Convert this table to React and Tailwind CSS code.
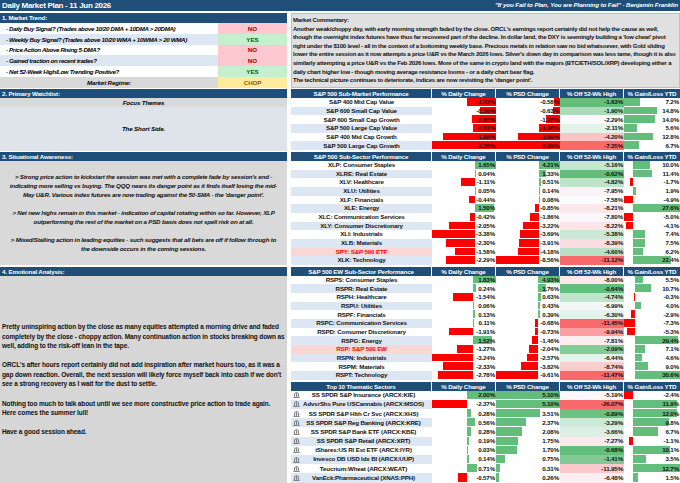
import React from "react";

const FONT = "font-['Liberation_Sans',Arial,sans-serif]";
const TXT = "text-[6.2px] tracking-[-0.15px]";

const trend = [
  { label: "Daily Buy Signal? (Trades above 10/20 DMA + 10DMA > 20DMA)", ok: false },
  { label: "Weekly Buy Signal? (Trades above 10/20 WMA + 10WMA > 20 WMA)", ok: true },
  { label: "Price Action Above Rising 5-DMA?", ok: false },
  { label: "Gained traction on recent trades?", ok: false },
  { label: "Net 52-Week High/Low Trending Positive?", ok: true },
];

const situational = [
  "> Strong price action to kickstart the session was met with a complete fade by session's end -",
  "indicating more selling vs buying. The QQQ nears its danger point as it finds itself losing the mid-",
  "May U&R. Various index futures are now trading against the 50-SMA - the 'danger point'.",
  "",
  "> Net new highs remain in this market - indication of capital rotating within so far. However, XLP",
  "outperforming the rest of the market on a PSD basis does not spell risk on at all.",
  "",
  "> Mixed/Stalling action in leading equities - such suggests that all bets are off if follow through to",
  "the downside occurs in the coming sessions.",
];

const emotional = [
  "Pretty uninspiring action by the close as many equities attempted a morning drive and faded",
  "completely by the close - choppy action. Many continuation action in stocks breaking down as",
  "well, adding to the risk-off lean in the tape.",
  "",
  "ORCL's after hours report certainly did not add inspiration after market hours too, as it was a",
  "gap down reaction. Overall, the next session will likely force myself back into cash if we don't",
  "see a strong recovery as I wait for the dust to settle.",
  "",
  "Nothing too much to talk about until we see more constructive price action to trade again.",
  "Here comes the summer lull!",
  "",
  "Have a good session ahead.",
];

const commentary = [
  "Another weak/choppy day, with early morning strength faded by the close. ORCL's earnings report certainly did not help the cause as well,",
  "though the overnight index futures have thus far recovered part of the decline. In dollar land, the DXY is seemingly building a 'low cheat' pivot",
  "right under the $100 level - all in the context of a bottoming weekly base. Precious metals in relation saw no bid whatsoever, with Gold sliding",
  "lower the entire session as it now attempts a price U&R vs the March 2026 lows. Silver's down day in comparison was less tame, though it is also",
  "similarly attempting a price U&R vs the Feb 2026 lows. More of the same in crypto land with the majors (BTC/ETH/SOL/XRP) developing either a",
  "daily chart higher low - though moving average resistance looms - or a daily chart bear flag.",
  "The technical picture continues to deteriorate, indices are now revisiting the 'danger point'.",
];

const tables = [
  {
    title: "S&P 500 Sub-Market Performance",
    rowH: "h-[8.67px]",
    ytdMax: 25,
    rows: [
      ["S&P 400 Mid Cap Value", -1.03, -0.58, -1.63, 7.2],
      ["S&P 600 Small Cap Value", -0.56, -0.63, -1.9, 14.8],
      ["S&P 600 Small Cap Growth", -0.85, -1.28, -2.29, 14.0],
      ["S&P 500 Large Cap Value", -0.81, -1.96, -2.11, 5.6],
      ["S&P 400 Mid Cap Growth", -1.88, -3.89, -4.2, 12.8],
      ["S&P 500 Large Cap Growth", -2.26, -5.99, -7.35, 6.7],
    ],
  },
  {
    title: "S&P 500 Sub-Sector Performance",
    rowH: "h-[8.67px]",
    rows: [
      ["XLP: Consumer Staples", 1.65, 4.21, -5.16, 10.0],
      ["XLRE: Real Estate", 0.04, 1.33, -0.62, 11.4],
      ["XLV: Healthcare", -1.11, 0.51, -4.82, -1.7],
      ["XLU: Utilities", 0.05, 0.14, -7.95, 1.9],
      ["XLF: Financials", -0.44, 0.08, -7.58, -4.9],
      ["XLE: Energy", 1.5, -0.85, -8.21, 27.6],
      ["XLC: Communication Services", -0.42, -1.86, -7.8, -5.0],
      ["XLY: Consumer Discretionary", -2.05, -3.22, -8.22, -4.1],
      ["XLI: Industrials", -3.38, -3.69, -5.38, 7.4],
      ["XLB: Materials", -2.3, -3.91, -8.39, 7.5],
      ["SPY: S&P 500 ETF", -1.58, -4.18, -4.6, 6.2, true],
      ["XLK: Technology", -2.29, -8.56, -11.12, 22.4],
    ],
  },
  {
    title: "S&P 500 EW Sub-Sector Performance",
    rowH: "h-[8.67px]",
    rows: [
      ["RSPS: Consumer Staples", 1.83, 4.93, -8.0, 5.5],
      ["RSPR: Real Estate", 0.24, 1.76, -0.64, 10.7],
      ["RSPH: Healthcare", -1.54, 0.63, -4.74, -0.3],
      ["RSPU: Utilities", 0.06, 0.43, -6.99, 4.0],
      ["RSPF: Financials", 0.13, 0.39, -6.3, -2.9],
      ["RSPC: Communication Services", 0.11, -0.68, -11.45, -7.3],
      ["RSPD: Consumer Discretionary", -1.91, -0.73, -9.94, -5.3],
      ["RSPG: Energy", 1.52, -1.46, -7.81, 29.4],
      ["RSP: S&P 500 EW", -1.27, -2.04, -2.09, 7.1, true],
      ["RSPN: Industrials", -3.24, -2.57, -6.44, 4.6],
      ["RSPM: Materials", -2.33, -3.82, -8.74, 9.0],
      ["RSPT: Technology", -2.78, -9.61, -11.47, 30.6],
    ],
  },
  {
    title: "Top 10 Thematic Sectors",
    rowH: "h-[9.2px]",
    icon: true,
    rows: [
      ["SS SPDR S&P Insurance (ARCX:KIE)", 2.0, 5.1, -5.19, -2.4],
      ["AdvsrShs Pure USCannabis (ARCX:MSOS)", -2.37, 5.1, -26.07, 11.9],
      ["SS SPDR S&P Hlth Cr Svc (ARCX:XHS)", 0.28, 3.51, -0.89, 12.0],
      ["SS SPDR S&P Reg Banking (ARCX:KRE)", 0.56, 2.37, -3.29, 9.8],
      ["SS SPDR S&P Bank ETF (ARCX:KBE)", 0.28, 2.08, -3.66, 6.7],
      ["SS SPDR S&P Retail (ARCX:XRT)", 0.19, 1.75, -7.27, -1.1],
      ["iShares:US Rl Est ETF (ARCX:IYR)", 0.03, 1.7, -0.68, 10.1],
      ["Invesco DB USD Idx Bl (ARCX:UUP)", 0.14, 0.75, -1.41, 3.5],
      ["Teucrium:Wheat (ARCX:WEAT)", 0.71, 0.31, -11.95, 12.7],
      ["VanEck:Pharmaceutical (XNAS:PPH)", -0.57, 0.26, -6.48, 1.5],
    ],
  },
];

function mix(a, b, t) {
  const c = a.map((x, i) => Math.round(x + (b[i] - x) * Math.max(0, Math.min(1, t))));
  return `rgb(${c[0]},${c[1]},${c[2]})`;
}

// 3-colour scale, midpoint at the median like Excel's default
function scaleColor(v, vals) {
  const s = [...vals].sort((a, b) => a - b);
  const n = s.length;
  const mid = n % 2 ? s[(n - 1) / 2] : (s[n / 2 - 1] + s[n / 2]) / 2;
  const red = [248, 105, 107];
  const white = [252, 252, 255];
  const green = [99, 190, 123];
  if (v <= mid) return mix(red, white, (v - s[0]) / (mid - s[0] || 1));
  return mix(white, green, (v - mid) / (s[n - 1] - mid || 1));
}

function BarCell({ v, vals, digits, fixedMax, w }) {
  const lo = Math.min(...vals, 0);
  let hi = Math.max(...vals, 0);
  if (fixedMax) hi = Math.max(hi, fixedMax);
  const range = hi - lo || 1;
  const axis = (-lo / range) * 100;
  const len = (Math.abs(v) / range) * 100;
  const left = v < 0 ? axis - len : axis;
  return (
    <div className={`relative h-full ${w} bg-white`}>
      <div
        className={v < 0 ? "absolute top-0 bottom-[1px] bg-[#ff0000]" : "absolute top-0 bottom-[1px] bg-[#63be7b]"}
        style={{ left: left + "%", width: len + "%" }}
      />
      <div className="relative h-full flex items-center justify-end pr-[1px]">{v.toFixed(digits)}%</div>
    </div>
  );
}

function StockIcon() {
  return (
    <svg width="7" height="6" viewBox="0 0 7 6" className="shrink-0">
      <path d="M0.5 1.6 L3.5 0.3 L6.5 1.6 Z" fill="#595959" />
      <rect x="1" y="2" width="0.8" height="2.6" fill="#595959" />
      <rect x="3.1" y="2" width="0.8" height="2.6" fill="#595959" />
      <rect x="5.2" y="2" width="0.8" height="2.6" fill="#595959" />
      <rect x="0.4" y="4.8" width="6.2" height="0.9" fill="#595959" />
    </svg>
  );
}

function PerfTable({ t }) {
  const cols = [1, 2, 3, 4].map((i) => t.rows.map((r) => r[i]));
  return (
    <div className="flex flex-col">
      <div className={`flex h-[9px] items-center bg-[#1f4e78] text-white font-bold ${TXT} leading-[9px]`}>
        <div className="w-[141px] h-full text-center border-r border-white">{t.title}</div>
        <div className="w-[64px] h-full text-center border-r border-white">% Daily Change</div>
        <div className="w-[64px] h-full text-center border-r border-white">% PSD Change</div>
        <div className="w-[64px] h-full text-center border-r border-white">% Off 52-Wk High</div>
        <div className="flex-1 h-full text-center">% Gain/Loss YTD</div>
      </div>
      {t.rows.map((r, i) => {
        const hl = r[5];
        const nameBg = hl ? "bg-[#f8d7d5] text-[#ff0000]" : i % 2 ? "bg-[#dde7f3]" : "bg-white";
        return (
          <div key={r[0]} className={`flex ${t.rowH} ${TXT} font-bold text-[#111] leading-none`}>
            <div className={`w-[141px] h-full flex items-center ${nameBg}`}>
              {t.icon && (
                <div className="w-[10px] flex justify-center">
                  <StockIcon />
                </div>
              )}
              <div className={t.icon ? "flex-1 text-center pr-[6px] whitespace-nowrap" : "flex-1 text-center whitespace-nowrap"}>{r[0]}</div>
            </div>
            <BarCell v={r[1]} vals={cols[0]} digits={2} w="w-[64px]" />
            <BarCell v={r[2]} vals={cols[1]} digits={2} w="w-[64px]" />
            <div
              className="w-[64px] h-full flex items-center justify-end pr-[1px]"
              style={{ backgroundColor: scaleColor(r[3], cols[2]) }}
            >
              {r[3].toFixed(2)}%
            </div>
            <div className="flex-1 h-full">
              <BarCell v={r[4]} vals={cols[3]} digits={1} fixedMax={t.ytdMax} w="w-full" />
            </div>
          </div>
        );
      })}
    </div>
  );
}

function SectionHead({ children }) {
  return (
    <div className={`h-[9px] bg-[#1f4e78] text-white font-bold ${TXT} leading-[9px] pl-[2px]`}>{children}</div>
  );
}

export default function App() {
  return (
    <div className={`w-[680px] h-[483px] overflow-hidden bg-white flex flex-col ${FONT}`}>
      <div className="h-[11px] shrink-0 bg-[#1f4e78] flex items-center justify-between px-[2px] text-white font-bold">
        <span className="text-[8px] tracking-[-0.3px] leading-none">Daily Market Plan - 11 Jun 2026</span>
        <span className="text-[6.2px] tracking-[-0.1px] leading-none italic">"If you Fail to Plan, You are Planning to Fail" - Benjamin Franklin</span>
      </div>

      <div className="flex flex-1 gap-[4px] min-h-0">
        {/* left side */}
        <div className="w-[287px] flex flex-col">
          <div className={`mt-[2px] h-[10px] bg-[#1f4e78] text-white font-bold ${TXT} leading-[10px] pl-[2px]`}>
            1. Market Trend:
          </div>
          {trend.map((t, i) => (
            <div key={t.label} className={`flex h-[10.8px] text-[6.2px] font-bold`}>
              <div className={`w-[218px] flex items-center pl-[6px] italic whitespace-nowrap tracking-[-0.35px] ${i % 2 ? "bg-[#dde7f3]" : "bg-white"}`}>
                - {t.label}
              </div>
              <div
                className={
                  t.ok
                    ? "flex-1 flex items-center justify-center bg-[#c6efce] text-[#006100]"
                    : "flex-1 flex items-center justify-center bg-[#ffc7ce] text-[#9c0006]"
                }
              >
                {t.ok ? "YES" : "NO"}
              </div>
            </div>
          ))}
          <div className={`flex h-[11px] ${TXT} font-bold`}>
            <div className="w-[218px] flex items-center justify-center italic bg-[#d9d9d9]">Market Regime:</div>
            <div className="flex-1 flex items-center justify-center bg-[#ffeb9c] text-[#9c5700]">CHOP</div>
          </div>

          <div className="mt-[1px]">
            <SectionHead>2. Primary Watchlist:</SectionHead>
          </div>
          <div className={`h-[9px] bg-[#d9d9d9] ${TXT} font-bold italic flex items-center justify-center`}>
            Focus Themes
          </div>
          <div className={`h-[44px] bg-[#dfe4ea] ${TXT} font-bold italic flex items-center justify-center`}>
            The Short Side.
          </div>

          <div className="mt-[1px]">
            <SectionHead>3. Situational Awareness:</SectionHead>
          </div>
          <div className="h-[104px] bg-[#d9d9d9] flex flex-col justify-center items-center text-[6.2px] tracking-[-0.2px] font-bold italic leading-[9px] text-[#111]">
            {situational.map((l, i) => (
              <div key={i} className="whitespace-nowrap h-[9px]">
                {l}
              </div>
            ))}
          </div>

          <div className="mt-[2px]">
            <SectionHead>4. Emotional Analysis:</SectionHead>
          </div>
          <div className="flex-1 bg-[#d6d6d6] flex flex-col justify-center pl-[2px] text-[6.5px] tracking-[-0.1px] font-bold leading-[9.6px] text-[#111]">
            {emotional.map((l, i) => (
              <div key={i} className="whitespace-nowrap h-[9.6px]">
                {l}
              </div>
            ))}
          </div>
        </div>

        {/* right side */}
        <div className="w-[389px] flex flex-col">
          <div className="mt-[2px] h-[75px] bg-[#e0e0e0] border border-[#bfbfbf] px-[1px] pt-[2px] text-[6px] tracking-[-0.22px] font-bold leading-[8.6px] text-[#111]">
            <div>Market Commentary:</div>
            {commentary.map((l, i) => (
              <div key={i} className="whitespace-nowrap">
                {l}
              </div>
            ))}
          </div>
          <div className="mt-[1px] flex flex-col gap-[2px]">
            {tables.map((t) => (
              <PerfTable key={t.title} t={t} />
            ))}
          </div>
        </div>
      </div>
    </div>
  );
}
